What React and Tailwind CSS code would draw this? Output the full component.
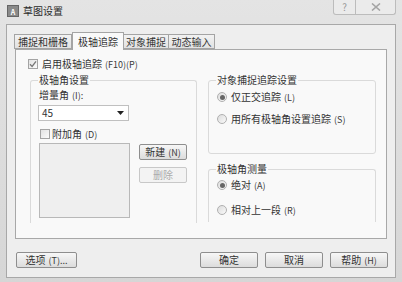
import React from "react";

const font = { fontFamily: "'Noto Sans CJK SC', 'Noto Sans', sans-serif" };

function Key({ children }) {
  return <span className="text-[9px] ml-[3px] text-[#3a3a3a]">{children}</span>;
}

function CheckBox({ checked }) {
  return (
    <span className="w-[10px] h-[10px] border border-[#a4a4a4] bg-gradient-to-br from-[#e2e2e2] to-[#fbfbfb] flex items-center justify-center shrink-0">
      {checked && (
        <svg width="8" height="8" viewBox="0 0 8 8">
          <path d="M1 4.2 L3.1 6.4 L7 1.3" stroke="#777" strokeWidth="1.3" fill="none" />
        </svg>
      )}
    </span>
  );
}

function Radio({ checked, label, k }) {
  return (
    <div className="flex items-center gap-[4px] h-[12px]">
      <span className="w-[10px] h-[10px] rounded-full border border-[#b0b0b0] bg-gradient-to-br from-[#dcdcdc] to-[#fafafa] flex items-center justify-center shrink-0">
        {checked && <span className="w-[5px] h-[5px] rounded-full bg-[#666]" />}
      </span>
      <span className="text-[10px] leading-none text-[#333]">
        {label}
        <Key>{k}</Key>
      </span>
    </div>
  );
}

function Btn({ children, w, disabled }) {
  return (
    <button
      className={`h-[16px] rounded-[2px] border text-[10px] leading-none flex items-center justify-center ${w} ${
        disabled
          ? "border-[#c8c8c8] bg-[#f3f3f3] text-[#ababab]"
          : "border-[#8e8e8e] bg-gradient-to-b from-[#f7f7f7] to-[#dcdcdc] text-[#333]"
      }`}
    >
      {children}
    </button>
  );
}

function Group({ title, className, children, open }) {
  return (
    <fieldset
      className={`border border-[#dadada] rounded-[3px] px-[9px] ${open ? "border-b-0 rounded-b-none" : ""} ${className}`}
    >
      <legend className="ml-[-2px] px-[1px] text-[10px] leading-[12px] text-[#333]">{title}</legend>
      {children}
    </fieldset>
  );
}

export default function App() {
  const tabs = ["捕捉和栅格", "极轴追踪", "对象捕捉", "动态输入"];
  const tabW = ["w-[58px]", "w-[52px]", "w-[46px]", "w-[47px]"];

  return (
    <div className="w-[402px] h-[282px] bg-gradient-to-b from-[#e4e4e4] to-[#d6d6d6] flex flex-col overflow-hidden text-[#333]" style={font}>
      {/* title bar */}
      <div className="h-[24px] flex items-start shrink-0">
        <div className="ml-[7px] mt-[5px] w-[12px] h-[12px] bg-[#8a8a8a] border border-[#666] flex items-end justify-center overflow-hidden">
          <span className="text-[7px] leading-none text-white font-bold">A</span>
        </div>
        <span className="ml-[4px] mt-[5px] text-[10px] leading-[12px] text-[#2a2a2a]">草图设置</span>
        <div className="ml-auto mr-[6px] flex h-[15px] border border-t-0 border-[#bcbcbc] rounded-b-[3px] bg-[#ebebeb]">
          <div className="w-[22px] flex items-center justify-center border-r border-[#bcbcbc] text-[10px] leading-none text-[#999]">?</div>
          <div className="w-[39px] flex items-center justify-center">
            <svg width="10" height="8" viewBox="0 0 10 8">
              <path d="M1 0.5 L9 7.5 M9 0.5 L1 7.5" stroke="#a4a4a4" strokeWidth="1.6" fill="none" />
            </svg>
          </div>
        </div>
      </div>

      {/* client */}
      <div className="mx-[6px] mb-[4px] flex-1 border border-[#a8a8a8] bg-[#eeeeee] flex flex-col">
        <div className="flex items-end pl-[8px] pt-[6px] h-[24px]">
          {tabs.map((t, i) => (
            <div
              key={t}
              className={`${tabW[i]} flex items-center justify-center text-[10px] leading-none border border-[#a4a4a4] ${
                i === 1
                  ? "h-[18px] bg-[#f9f9f9] border-b-0 -mb-px relative z-10"
                  : "h-[15px] bg-gradient-to-b from-[#f2f2f2] to-[#e2e2e2] -ml-px"
              }`}
            >
              {t}
            </div>
          ))}
        </div>

        {/* tab page */}
        <div className="ml-[8px] w-[372px] h-[190px] border border-[#a8a8a8] bg-[#f9f9f9] flex flex-col pl-[12px] pr-[12px]">
          <div className="mt-[8px] flex items-center gap-[4px] h-[11px]">
            <CheckBox checked />
            <span className="text-[10px] leading-none">
              启用极轴追踪
              <Key>(F10)(P)</Key>
            </span>
          </div>

          <div className="mt-[5px] flex gap-[11px] pl-[2px]">
            <Group title="极轴角设置" className="w-[166px] h-[149px]" open>
              <div className="text-[10px] leading-none mt-[4px] ml-[-1px]">
                增量角<Key>(I):</Key>
              </div>
              <div className="mt-[5px] ml-[-2px] w-[91px] h-[16px] bg-white border border-[#c0c0c0] flex items-center pl-[3px] pr-[4px]">
                <span className="text-[10px] leading-none">45</span>
                <svg className="ml-auto" width="7" height="4" viewBox="0 0 7 4">
                  <path d="M0 0 H7 L3.5 4 Z" fill="#222" />
                </svg>
              </div>
              <div className="mt-[8px] flex items-center gap-[2px]">
                <CheckBox />
                <span className="text-[10px] leading-none">
                  附加角<Key>(D)</Key>
                </span>
              </div>
              <div className="mt-[4px] flex gap-[9px] ml-[-1px]">
                <div className="w-[91px] h-[75px] border border-[#b8b8b8] bg-[#efefef]" />
                <div className="flex flex-col gap-[7px] mt-px">
                  <Btn w="w-[48px]">
                    新建<Key>(N)</Key>
                  </Btn>
                  <Btn w="w-[48px]" disabled>删除</Btn>
                </div>
              </div>
            </Group>

            <div className="flex flex-col gap-[9px]">
              <Group title="对象捕捉追踪设置" className="w-[168px] h-[80px]">
                <div className="mt-[5px] flex flex-col gap-[10px] ml-[-1px]">
                  <Radio checked label="仅正交追踪" k="(L)" />
                  <Radio label="用所有极轴角设置追踪" k="(S)" />
                </div>
              </Group>
              <Group title="极轴角测量" className="w-[168px] h-[59px]" open>
                <div className="mt-[4px] flex flex-col gap-[13px] ml-[-1px]">
                  <Radio checked label="绝对" k="(A)" />
                  <Radio label="相对上一段" k="(R)" />
                </div>
              </Group>
            </div>
          </div>
        </div>

        {/* bottom buttons */}
        <div className="mt-[13px] flex items-center pl-[9px]">
          <Btn w="w-[61px]">
            选项<Key>(T)...</Key>
          </Btn>
          <div className="ml-auto flex gap-[7px] mr-[7px]">
            <Btn w="w-[58px]">确定</Btn>
            <Btn w="w-[58px]">取消</Btn>
            <Btn w="w-[58px]">
              帮助<Key>(H)</Key>
            </Btn>
          </div>
        </div>
      </div>
    </div>
  );
}
